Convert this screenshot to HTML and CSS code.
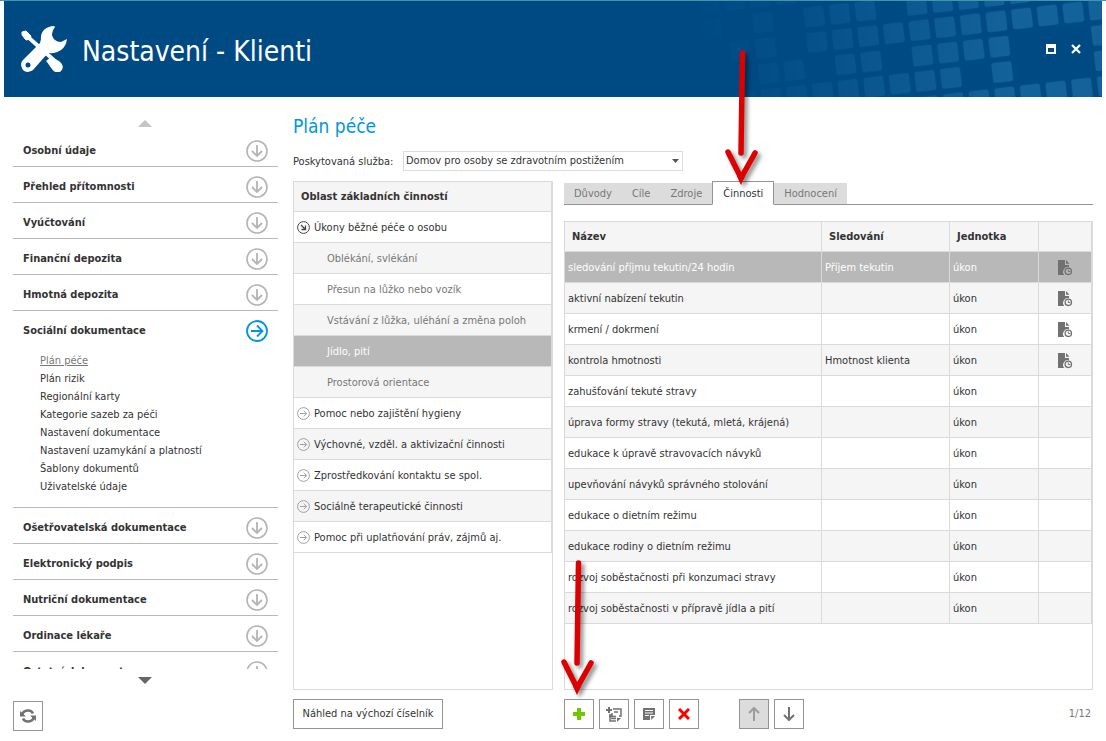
FILE: index.html
```html
<!DOCTYPE html>
<html lang="cs">
<head>
<meta charset="utf-8">
<title>Nastavení - Klienti</title>
<link rel="stylesheet" href="styles.css">
</head>
<body>
<svg class="sprite" aria-hidden="true">
  <symbol id="down" viewBox="0 0 22 22"><circle cx="11" cy="11" r="10" fill="none" stroke="currentColor" stroke-width="1.600"/><path d="M11 5v11M6 11l5 5 5-5" fill="none" stroke="currentColor" stroke-width="1.800"/></symbol>
  <symbol id="right" viewBox="0 0 22 22"><circle cx="11" cy="11" r="10" fill="none" stroke="currentColor" stroke-width="1.800"/><path d="M5 11h11M11 5.500l5.500 5.500-5.500 5.500" fill="none" stroke="currentColor" stroke-width="1.800"/></symbol>
  <symbol id="node" viewBox="0 0 13 13"><circle cx="6.500" cy="6.500" r="5.900" fill="none" stroke="currentColor"/><path d="M3 6.500h6.500M6.800 3.700l2.800 2.800-2.800 2.800" fill="none" stroke="currentColor"/></symbol>
  <symbol id="node-open" viewBox="0 0 13 13"><circle cx="6.500" cy="6.500" r="5.900" fill="none" stroke="currentColor"/><path d="M4 4l4.500 4.500M8.500 4.500v4h-4" fill="none" stroke="currentColor" stroke-width="1.300"/></symbol>
  <symbol id="record" viewBox="0 0 15 16"><path d="M0 0h7v5h4v2.300A4.700 4.700 0 0 0 6.300 15H0z" fill="currentColor"/><path d="M8 0l3.500 3.800H8z" fill="currentColor"/><circle cx="10.300" cy="11.300" r="3.200" fill="none" stroke="currentColor" stroke-width="1.300"/><path d="M10.300 9.500v2h2" fill="none" stroke="currentColor"/></symbol>
  <symbol id="pointer" viewBox="0 0 50 150"><g fill="none" stroke="#dc0000" stroke-width="5.500" stroke-linecap="round"><path d="M26.500 14L25 114"/><path d="M12 113l13 26 14-25"/></g><path d="M21 137l4 9 4-9z" fill="#dc0000"/></symbol>
</svg>
<div class="app">
  <header class="titlebar">
    <svg class="mosaic" width="422" height="96" aria-hidden="true">
      <defs>
        <pattern id="cells" width="10" height="10" patternUnits="userSpaceOnUse"><rect x="1.100" y="1.100" width="7.800" height="7.800" rx="1" fill="#14629a"/></pattern>
        <linearGradient id="fade" gradientUnits="userSpaceOnUse" x1="0" y1="0" x2="330" y2="0"><stop offset="0" stop-color="#fff" stop-opacity="0"/><stop offset=".4" stop-color="#fff" stop-opacity=".3"/><stop offset="1" stop-color="#fff"/></linearGradient>
        <mask id="fading" maskUnits="userSpaceOnUse" x="0" y="0" width="422" height="96"><rect width="422" height="96" fill="url(#fade)"/></mask>
      </defs>
      <g mask="url(#fading)">
        <g transform="translate(137 41) rotate(-6.550) scale(2.580 2.550) translate(-5 -5)" fill="url(#cells)">
          <rect x="-40" y="-20" width="40" height="10"/>
          <rect x="-40" y="-10" width="10" height="10"/><rect x="-20" y="-10" width="10" height="10"/><rect x="0" y="-10" width="30" height="10"/><rect x="40" y="-10" width="50" height="10"/>
          <rect x="-30" y="0" width="20" height="10"/><rect x="0" y="0" width="120" height="10"/>
          <rect x="-20" y="10" width="20" height="10"/><rect x="10" y="10" width="20" height="10"/><rect x="40" y="10" width="40" height="10"/><rect x="110" y="10" width="10" height="10"/>
          <rect x="-30" y="20" width="90" height="10"/><rect x="70" y="20" width="10" height="10"/><rect x="110" y="20" width="10" height="10"/>
          <rect x="40" y="30" width="80" height="10"/>
        </g>
      </g>
    </svg>
    <svg class="tools" viewBox="0 0 46 46" aria-hidden="true">
      <path d="M7 11l28 25" stroke="#fff" stroke-width="3.800"/>
      <path d="M1 6l4-1 5 5-1 3-4 1-4-5z" fill="#fff" stroke="#fff" stroke-linejoin="round"/>
      <path d="M25 35l5-4 8 4c4 3 5 7 2 10s-7 1-9-2c-2-2-3-5-6-8z" fill="#fff"/>
      <path d="M33 0c-8 0-14 6-13 13L19 17 2 34c-3 3-2 7 0 10 3 3 7 2 10 0L27 27c10 1 18-4 19-14l-6 3c-5 0-8-3-9-7 0-3 1-5 3-8z" fill="#fff"/>
      <circle cx="7" cy="39" r="2.500" fill="#004a84"/>
    </svg>
    <h1 class="titlebar-text">Nastavení - Klienti</h1>
    <div class="window-controls">
      <button class="window-button" aria-label="Maximalizovat"><svg width="10" height="10"><path d="M0 0h10v10H0zM2 4v4h6V4z" fill="#fff" fill-rule="evenodd"/></svg></button>
      <button class="window-button" aria-label="Zavřít"><svg width="10" height="10"><path d="M1 1l8 8M9 1L1 9" stroke="#fff" stroke-width="2.200"/></svg></button>
    </div>
  </header>
  <div class="body">
    <aside class="sidebar">
      <button class="scroll scroll-up" aria-label="Nahoru"><svg width="14" height="7"><path d="M0 7l7-7 7 7z" fill="currentColor"/></svg></button>
      <ul class="nav">
        <li class="nav-item"><button class="nav-button">Osobní údaje<svg class="nav-icon"><use href="#down"/></svg></button></li>
        <li class="nav-item"><button class="nav-button">Přehled přítomnosti<svg class="nav-icon"><use href="#down"/></svg></button></li>
        <li class="nav-item"><button class="nav-button">Vyúčtování<svg class="nav-icon"><use href="#down"/></svg></button></li>
        <li class="nav-item"><button class="nav-button">Finanční depozita<svg class="nav-icon"><use href="#down"/></svg></button></li>
        <li class="nav-item"><button class="nav-button">Hmotná depozita<svg class="nav-icon"><use href="#down"/></svg></button></li>
        <li class="nav-item"><button class="nav-button">Sociální dokumentace<svg class="nav-icon nav-icon-open"><use href="#right"/></svg></button>
          <ul class="subnav">
            <li><a class="subnav-link subnav-current" href="#">Plán péče</a></li>
            <li><a class="subnav-link" href="#">Plán rizik</a></li>
            <li><a class="subnav-link" href="#">Regionální karty</a></li>
            <li><a class="subnav-link" href="#">Kategorie sazeb za péči</a></li>
            <li><a class="subnav-link" href="#">Nastavení dokumentace</a></li>
            <li><a class="subnav-link" href="#">Nastavení uzamykání a platností</a></li>
            <li><a class="subnav-link" href="#">Šablony dokumentů</a></li>
            <li><a class="subnav-link" href="#">Uživatelské údaje</a></li>
          </ul>
        </li>
        <li class="nav-item"><button class="nav-button">Ošetřovatelská dokumentace<svg class="nav-icon"><use href="#down"/></svg></button></li>
        <li class="nav-item"><button class="nav-button">Elektronický podpis<svg class="nav-icon"><use href="#down"/></svg></button></li>
        <li class="nav-item"><button class="nav-button">Nutriční dokumentace<svg class="nav-icon"><use href="#down"/></svg></button></li>
        <li class="nav-item"><button class="nav-button">Ordinace lékaře<svg class="nav-icon"><use href="#down"/></svg></button></li>
        <li class="nav-item"><button class="nav-button">Ostatní dokumenty<svg class="nav-icon"><use href="#down"/></svg></button></li>
      </ul>
      <button class="scroll scroll-down" aria-label="Dolů"><svg width="14" height="7"><path d="M0 0h14L7 7z" fill="currentColor"/></svg></button>
      <button class="tool" aria-label="Obnovit"><svg width="16" height="14" viewBox="0 0 16 14"><path d="M2 6.500C3 .500 11 0 13 4.500M14 7.500C13 13.500 5 14 3 9.500" fill="none" stroke="currentColor" stroke-width="2.600"/><path d="M0 2v5.500h6zM16 12V6.500h-6z" fill="currentColor"/></svg></button>
    </aside>
    <main class="content">
      <h2 class="heading">Plán péče</h2>
      <div class="field">
        <label class="field-label" for="service">Poskytovaná služba:</label>
        <div class="combo">
          <select class="combo-select" id="service"><option>Domov pro osoby se zdravotním postižením</option></select>
          <svg class="combo-arrow" width="7" height="4"><path d="M0 0h7L3.500 4z" fill="#555"/></svg>
        </div>
      </div>
      <div class="columns">
        <section class="column">
          <div class="panel">
            <div class="tree">
              <h3 class="tree-title">Oblast základních činností</h3>
              <ul class="tree-list">
                <li class="tree-row"><button class="tree-button"><svg class="tree-icon tree-icon-open"><use href="#node-open"/></svg>Úkony běžné péče o osobu</button></li>
                <li class="tree-row"><button class="tree-button tree-leaf">Oblékání, svlékání</button></li>
                <li class="tree-row"><button class="tree-button tree-leaf">Přesun na lůžko nebo vozík</button></li>
                <li class="tree-row"><button class="tree-button tree-leaf">Vstávání z lůžka, uléhání a změna poloh</button></li>
                <li class="tree-row selected"><button class="tree-button tree-leaf">Jídlo, pití</button></li>
                <li class="tree-row"><button class="tree-button tree-leaf">Prostorová orientace</button></li>
                <li class="tree-row"><button class="tree-button"><svg class="tree-icon"><use href="#node"/></svg>Pomoc nebo zajištění hygieny</button></li>
                <li class="tree-row"><button class="tree-button"><svg class="tree-icon"><use href="#node"/></svg>Výchovné, vzděl. a aktivizační činnosti</button></li>
                <li class="tree-row"><button class="tree-button"><svg class="tree-icon"><use href="#node"/></svg>Zprostředkování kontaktu se spol.</button></li>
                <li class="tree-row"><button class="tree-button"><svg class="tree-icon"><use href="#node"/></svg>Sociálně terapeutické činnosti</button></li>
                <li class="tree-row"><button class="tree-button"><svg class="tree-icon"><use href="#node"/></svg>Pomoc při uplatňování práv, zájmů aj.</button></li>
              </ul>
            </div>
          </div>
          <div class="actions"><button class="text-button">Náhled na výchozí číselník</button></div>
        </section>
        <section class="column">
          <div class="tabs" role="tablist">
            <button class="tab" role="tab">Důvody</button><button class="tab" role="tab">Cíle</button><button class="tab" role="tab">Zdroje</button><button class="tab tab-active" role="tab" aria-selected="true">Činnosti<svg class="pointer"><use href="#pointer"/></svg></button><button class="tab" role="tab">Hodnocení</button>
          </div>
          <div class="panel">
            <table class="grid">
              <colgroup><col><col class="col-watch"><col class="col-unit"><col class="col-icon"></colgroup>
              <thead><tr><th>Název</th><th>Sledování</th><th>Jednotka</th><th></th></tr></thead>
              <tbody>
                <tr class="selected"><td>sledování příjmu tekutin/24 hodin</td><td>Příjem tekutin</td><td>úkon</td><td><svg class="record"><use href="#record"/></svg></td></tr>
                <tr><td>aktivní nabízení tekutin</td><td></td><td>úkon</td><td><svg class="record"><use href="#record"/></svg></td></tr>
                <tr><td>krmení / dokrmení</td><td></td><td>úkon</td><td><svg class="record"><use href="#record"/></svg></td></tr>
                <tr><td>kontrola hmotnosti</td><td>Hmotnost klienta</td><td>úkon</td><td><svg class="record"><use href="#record"/></svg></td></tr>
                <tr><td>zahušťování tekuté stravy</td><td></td><td>úkon</td><td></td></tr>
                <tr><td>úprava formy stravy (tekutá, mletá, krájená)</td><td></td><td>úkon</td><td></td></tr>
                <tr><td>edukace k úpravě stravovacích návyků</td><td></td><td>úkon</td><td></td></tr>
                <tr><td>upevňování návyků správného stolování</td><td></td><td>úkon</td><td></td></tr>
                <tr><td>edukace o dietním režimu</td><td></td><td>úkon</td><td></td></tr>
                <tr><td>edukace rodiny o dietním režimu</td><td></td><td>úkon</td><td></td></tr>
                <tr><td>rozvoj soběstačnosti při konzumaci stravy</td><td></td><td>úkon</td><td></td></tr>
                <tr><td>rozvoj soběstačnosti v přípravě jídla a pití</td><td></td><td>úkon</td><td></td></tr>
              </tbody>
            </table>
          </div>
          <div class="actions">
            <button class="tool" aria-label="Přidat"><svg width="12" height="12"><path d="M4 0h4v4h4v4H8v4H4V8H0V4h4z" fill="#72c800"/></svg><svg class="pointer"><use href="#pointer"/></svg></button>
            <button class="tool" aria-label="Přidat ze seznamu"><svg width="16" height="16" viewBox="0 0 16 16"><path d="M0 3h6v2H0zM2 1h2v6H2z" fill="currentColor"/><path d="M7 3h8v7h-2M8 6h4M3 9h3V7M3 10.500h7M4 9v6h6M5 12.500h5" fill="none" stroke="currentColor" stroke-width="1.500"/><path d="M11 12h4l-4 4z" fill="currentColor"/></svg></button>
            <button class="tool" aria-label="Upravit"><svg width="12" height="12" viewBox="0 0 12 12"><path d="M0 0h12v7H7v5H0zM2 2v1h8V2zM2 4.500v1h8v-1zM2 7v1h4V7z" fill="currentColor" fill-rule="evenodd"/><path d="M8.200 8H12l-3.800 4z" fill="currentColor"/></svg></button>
            <button class="tool" aria-label="Smazat"><svg width="12" height="12"><path d="M1 1l10 10M11 1L1 11" stroke="#f00" stroke-width="3"/></svg></button>
            <button class="tool tool-up" aria-label="Posunout nahoru" disabled><svg width="12" height="14"><path d="M6 14V1M1 6l5-5 5 5" fill="none" stroke="currentColor" stroke-width="2"/></svg></button>
            <button class="tool" aria-label="Posunout dolů"><svg width="12" height="14"><path d="M6 0v13M1 8l5 5 5-5" fill="none" stroke="currentColor" stroke-width="2"/></svg></button>
            <span class="counter">1/12</span>
          </div>
        </section>
      </div>
    </main>
  </div>
</div>
</body>
</html>
```
FILE: styles.css
```css
* { box-sizing: border-box; }
body { margin: 0; background: #fff; color: #333; font: 11px/16px Tahoma, "DejaVu Sans Condensed", "Noto Sans", sans-serif; }
button, select { font: inherit; color: inherit; background: none; border: 0; padding: 0; margin: 0; }
ul { list-style: none; margin: 0; padding: 0; }
h1, h2, h3 { margin: 0; }
svg { display: block; flex: none; }
.sprite { display: none; }

.app { display: flex; flex-direction: column; height: 100vh; border-top: 1px solid #3f97ab; overflow: hidden; }

.titlebar { position: relative; display: flex; align-items: center; gap: 15px; height: 96px; flex: none; margin: 0 4px; padding: 0 21px 0 17px; background: #004a84; color: #fff; overflow: hidden; }
.mosaic { position: absolute; top: 0; right: 0; }
.tools { position: relative; width: 46px; height: 46px; }
.titlebar-text { position: relative; flex: 1; padding-top: 5px; font-size: 28px; line-height: 36px; font-weight: normal; }
.window-controls { position: relative; display: flex; gap: 15px; }
.window-button { display: block; }

.body { flex: 1; min-height: 0; display: flex; gap: 15px; padding: 0 13px; }
.sidebar { width: 265px; flex: none; display: flex; flex-direction: column; align-items: flex-start; padding-bottom: 10px; }
.scroll { display: flex; justify-content: center; width: 100%; flex: none; padding-right: 2px; }
.scroll-up { height: 34px; padding-top: 23px; color: #c4c4c4; }
.scroll-down { height: 32px; padding-top: 8px; color: #666; }
.nav { flex: 1; min-height: 0; width: 100%; overflow: hidden; }
.nav-item { border-bottom: 1px solid #b8b8b8; }
.nav-button { display: flex; align-items: center; justify-content: space-between; width: 100%; height: 35px; padding: 4px 10px 0; font-weight: bold; text-align: left; }
.nav-icon { width: 22px; height: 22px; color: #b4b4b4; }
.nav-icon-open { color: #0096e0; }
.subnav { padding: 6px 0 11px 27px; }
.subnav-link { display: block; line-height: 18px; color: #333; text-decoration: none; }
.subnav-current { color: #777; text-decoration: underline; }

.content { flex: 1; min-width: 0; display: flex; flex-direction: column; padding-bottom: 12px; }
.heading { padding-top: 16px; height: 54px; font-size: 19px; line-height: 26px; font-weight: normal; color: #0096e0; }
.field { display: flex; align-items: center; gap: 10px; height: 20px; margin-bottom: 10px; }
.field-label { width: 100px; padding-top: 2px; white-space: nowrap; }
.combo { position: relative; width: 280px; }
.combo-select { appearance: none; display: block; width: 100%; height: 20px; padding: 0 16px 0 2px; border: 1px solid #dcdcdc; background: #fff; }
.combo-arrow { position: absolute; right: 4px; top: 8px; pointer-events: none; }

.columns { flex: 1; min-height: 0; display: grid; grid-template-columns: 260px 1fr; gap: 11px; }
.column { display: flex; flex-direction: column; min-width: 0; min-height: 0; }
.panel { flex: 1; min-height: 0; border: 1px solid #dadada; overflow: hidden; }
.tree { border-right: 1px solid #dadada; }
.tree-title { height: 30px; padding-left: 7px; border-bottom: 1px solid #dadada; background: #f5f5f5; font-size: 11px; line-height: 29px; }
.tree-row { height: 31px; border-bottom: 1px solid #dadada; }
.tree-row:nth-child(even) { background: #f5f5f5; }
.tree-button { display: flex; align-items: center; gap: 4px; width: 100%; height: 30px; padding: 1px 0 0 3px; text-align: left; }
.tree-leaf { padding-left: 33px; color: #777; }
.tree-icon { width: 13px; height: 13px; color: #a0a0a0; }
.tree-icon-open { color: #444; }
.tree-row.selected { background: #b8b8b8; }
.selected .tree-button { color: #fff; }

.tabs { display: flex; align-items: flex-end; height: 24px; margin-bottom: 16px; border-bottom: 1px solid #949494; }
.tab { height: 21px; padding: 1px 10px 0; background: #dcdcdc; color: #777; }
.tab-active { position: relative; height: 24px; margin-bottom: -1px; border: 1px solid #949494; border-bottom-color: #fff; background: #fff; color: #333; }
.pointer { position: absolute; left: 50%; width: 50px; height: 150px; margin-left: -27px; filter: drop-shadow(3px 3px 2px rgba(0, 0, 0, .45)); pointer-events: none; z-index: 1; }
.tab .pointer { bottom: 15px; }
.tool .pointer { bottom: 29px; }

.grid { width: 100%; table-layout: fixed; border-collapse: separate; border-spacing: 0; }
.col-watch { width: 128px; }
.col-unit { width: 89px; }
.col-icon { width: 53px; }
.grid th, .grid td { height: 31px; padding: 1px 3px 0; border-right: 1px solid #dadada; border-bottom: 1px solid #dadada; text-align: left; white-space: nowrap; }
.grid th { height: 30px; padding: 0 7px; background: #f5f5f5; }
.grid tbody tr:nth-child(even) { background: #f5f5f5; }
.grid tbody tr.selected { background: #b8b8b8; color: #fff; }
.record { width: 15px; height: 16px; margin: 0 auto; color: #717171; }

.actions { display: flex; gap: 5px; margin-top: 9px; }
.text-button { width: 150px; height: 30px; border: 1px solid #949494; background: #fff; }
.tool { position: relative; display: flex; align-items: center; justify-content: center; width: 30px; height: 30px; flex: none; border: 1px solid #949494; background: #fff; color: #717171; }
.tool-up { margin-left: 35px; background: #dcdcdc; color: #9c9c9c; }
.counter { margin-left: auto; padding-right: 2px; line-height: 30px; color: #777; }
```
